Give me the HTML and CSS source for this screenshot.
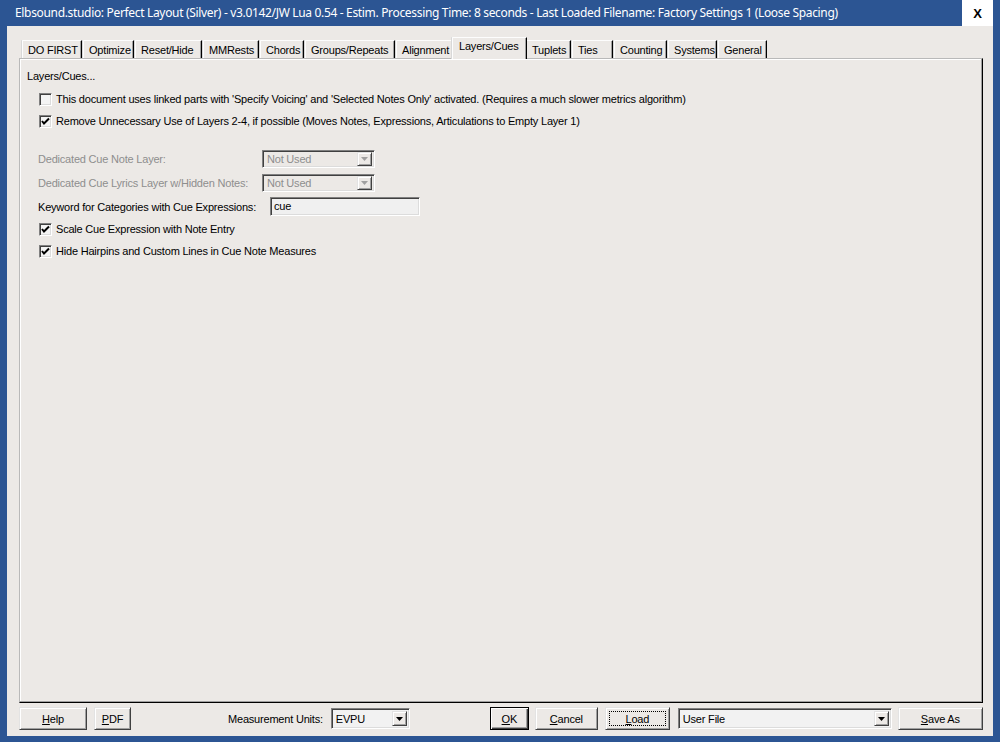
FILE: index.html
```html
<!DOCTYPE html>
<html>
<head>
<meta charset="utf-8">
<title>Perfect Layout</title>
<link rel="stylesheet" href="styles.css">
</head>
<body>
<div class="window">
  <div class="titlebar">
    <span class="title">Elbsound.studio: Perfect Layout (Silver) - v3.0142/JW Lua 0.54 - Estim. Processing Time: 8 seconds - Last Loaded Filename: Factory Settings 1 (Loose Spacing)</span>
    <div class="close">X</div>
  </div>
  <div class="client">
    <div class="tabs">
      <div class="tab t-do">DO FIRST</div>
      <div class="tab t-opt">Optimize</div>
      <div class="tab t-reset">Reset/Hide</div>
      <div class="tab t-mm">MMRests</div>
      <div class="tab t-ch">Chords</div>
      <div class="tab t-gr">Groups/Repeats</div>
      <div class="tab t-al">Alignment</div>
      <div class="tab selected t-lc">Layers/Cues</div>
      <div class="tab t-tu">Tuplets</div>
      <div class="tab t-ti">Ties</div>
      <div class="tab t-co">Counting</div>
      <div class="tab t-sy">Systems</div>
      <div class="tab t-ge">General</div>
    </div>
    <div class="panel">
      <div class="row heading">Layers/Cues...</div>
      <label class="row check">
        <span class="box"></span>
        <span>This document uses linked parts with 'Specify Voicing' and 'Selected Notes Only' activated. (Requires a much slower metrics algorithm)</span>
      </label>
      <label class="row check">
        <span class="box checked"><svg viewBox="0 0 13 13" width="13" height="13"><polyline points="3,6 5,8.5 10,3.5" fill="none" stroke="#000" stroke-width="2"/></svg></span>
        <span>Remove Unnecessary Use of Layers 2-4, if possible (Moves Notes, Expressions, Articulations to Empty Layer 1)</span>
      </label>
      <div class="spacer"></div>
      <div class="row field">
        <span class="flabel disabled">Dedicated Cue Note Layer:</span>
        <div class="combo dis">
          <span class="ctext">Not Used</span>
          <span class="arrow"><svg viewBox="0 0 7 4" width="7" height="4"><polygon points="0,0 7,0 3.5,4" fill="#a0a0a0"/></svg></span>
        </div>
      </div>
      <div class="row field">
        <span class="flabel disabled">Dedicated Cue Lyrics Layer w/Hidden Notes:</span>
        <div class="combo dis">
          <span class="ctext">Not Used</span>
          <span class="arrow"><svg viewBox="0 0 7 4" width="7" height="4"><polygon points="0,0 7,0 3.5,4" fill="#a0a0a0"/></svg></span>
        </div>
      </div>
      <div class="row field kw">
        <span class="klabel">Keyword for Categories with Cue Expressions:</span>
        <div class="input">cue</div>
      </div>
      <label class="row check">
        <span class="box checked"><svg viewBox="0 0 13 13" width="13" height="13"><polyline points="3,6 5,8.5 10,3.5" fill="none" stroke="#000" stroke-width="2"/></svg></span>
        <span>Scale Cue Expression with Note Entry</span>
      </label>
      <label class="row check">
        <span class="box checked"><svg viewBox="0 0 13 13" width="13" height="13"><polyline points="3,6 5,8.5 10,3.5" fill="none" stroke="#000" stroke-width="2"/></svg></span>
        <span>Hide Hairpins and Custom Lines in Cue Note Measures</span>
      </label>
    </div>
    <div class="footer">
      <div class="btn b-help"><u>H</u>elp</div>
      <div class="btn b-pdf"><u>P</u>DF</div>
      <span class="mlabel">Measurement Units:</span>
      <div class="combo en c-units">
        <span class="ctext">EVPU</span>
        <span class="arrow"><svg viewBox="0 0 7 4" width="7" height="4"><polygon points="0,0 7,0 3.5,4" fill="#000"/></svg></span>
      </div>
      <div class="btn default b-ok"><u>O</u>K</div>
      <div class="btn b-cancel"><u>C</u>ancel</div>
      <div class="btn focus b-load"><span class="focusrect"><u>L</u>oad</span></div>
      <div class="combo en c-file">
        <span class="ctext">User File</span>
        <span class="arrow"><svg viewBox="0 0 7 4" width="7" height="4"><polygon points="0,0 7,0 3.5,4" fill="#000"/></svg></span>
      </div>
      <div class="btn b-save"><u>S</u>ave As</div>
    </div>
  </div>
</div>
</body>
</html>
```
FILE: styles.css
```css
* { box-sizing: border-box; }
html, body { margin: 0; padding: 0; }
body {
  width: 1000px;
  height: 742px;
  overflow: hidden;
  background: #2c5593;
  font-family: "Liberation Sans", Arial, sans-serif;
  font-size: 11px;
  letter-spacing: -0.2px;
  color: #000;
}
.window {
  width: 1000px;
  height: 742px;
  display: flex;
  flex-direction: column;
  background: #2c5593;
  padding: 0 7px 6px 7px;
}
.titlebar {
  height: 26px;
  display: flex;
  align-items: center;
  margin: 0 -7px;
  padding-left: 15px;
}
.title {
  color: #fff;
  font-family: "Noto Sans", "Open Sans", sans-serif;
  font-size: 12px;
  letter-spacing: -0.33px;
  white-space: nowrap;
  flex: 1;
  overflow: hidden;
  padding-bottom: 1px;
}
.close {
  width: 31px;
  height: 26px;
  background: #fff;
  margin-right: 7px;
  display: flex;
  align-items: center;
  justify-content: center;
  font-weight: bold;
  font-size: 13px;
  letter-spacing: 0;
  color: #000;
}
.client {
  flex: 1;
  background: #ece9e6;
  display: flex;
  flex-direction: column;
  padding: 11px 10px 0 12px;
}
.tabs {
  display: flex;
  align-items: flex-end;
  height: 21px;
  padding-left: 3px;
  position: relative;
  z-index: 2;
}
.tab {
  height: 18px;
  line-height: 18px;
  padding: 0 5px;
  margin-right: 1px;
  border-top: 1px solid #fdfdfd;
  border-left: 1px solid #fdfdfd;
  border-right: 1px solid #000;
  box-shadow: inset -1px 0 #a0a0a0, -1px 0 #d8d8d8;
  border-top-left-radius: 1px;
  white-space: nowrap;
  background: #ece9e6;
}
.tab.selected {
  height: 22px;
  line-height: 16px;
  margin-left: -2px;
  margin-right: -1px;
  padding: 0 7px 4px 6px;
  margin-bottom: -1px;
  z-index: 3;
  position: relative;
}
.t-do { width: 60px; }
.t-opt { width: 51px; }
.t-reset { width: 67px; }
.t-mm { width: 56px; }
.t-ch { width: 44px; }
.t-gr { width: 90px; }
.t-al { width: 57px; }
.t-lc { width: 75px; }
.t-tu { width: 45px; }
.t-ti { width: 41px; }
.t-co { width: 53px; }
.t-sy { width: 49px; }
.t-ge { width: 49px; }

.panel {
  height: 645px;
  border-top: 1px solid #b9b9b9;
  border-left: 1px solid #b9b9b9;
  border-right: 1px solid #000;
  border-bottom: 1px solid #000;
  box-shadow: inset -1px -1px #a0a0a0, inset 1px 1px #fff;
  padding: 6px 0 0 6px;
  display: flex;
  flex-direction: column;
}
.row {
  display: flex;
  align-items: center;
  white-space: nowrap;
}
.heading { height: 23px; padding-left: 1px; padding-bottom: 1px; }
.check { height: 22px; padding-left: 13px; }
.box {
  width: 13px;
  height: 13px;
  margin-right: 4px;
  background: #f4f4f4;
  border-top: 1px solid #808080;
  border-left: 1px solid #808080;
  border-right: 1px solid #fff;
  border-bottom: 1px solid #fff;
  box-shadow: inset 1px 1px #404040, inset -1px -1px #dcdcdc;
  position: relative;
  flex: none;
}
.box svg {
  position: absolute;
  left: -1px;
  top: -1px;
}
.spacer { height: 15px; }
.field { height: 24px; padding-left: 12px; }
.kw { height: 23px; }
.flabel { width: 224px; flex: none; }
.klabel { width: 232px; flex: none; }
.disabled { color: #8e8e8e; }
.combo {
  height: 18px;
  display: flex;
  align-items: center;
  border-top: 1px solid #808080;
  border-left: 1px solid #808080;
  border-right: 1px solid #fff;
  border-bottom: 1px solid #fff;
  box-shadow: inset 1px 1px #404040, inset -1px -1px #dcdcdc;
  padding: 2px 2px 2px 3px;
}
.combo.dis {
  width: 113px;
  background: #ece9e6;
  color: #8e8e8e;
}
.ctext { flex: 1; padding-left: 1px; }
.arrow {
  width: 15px;
  height: 14px;
  display: flex;
  align-items: center;
  justify-content: center;
  background: #ece9e6;
  border-top: 1px solid #e3e3e3;
  border-left: 1px solid #e3e3e3;
  border-right: 1px solid #404040;
  border-bottom: 1px solid #404040;
  box-shadow: inset 1px 1px #fff, inset -1px -1px #a0a0a0;
}
.input {
  width: 150px;
  height: 19px;
  background: #f0f0f0;
  border-top: 1px solid #808080;
  border-left: 1px solid #808080;
  border-right: 1px solid #fff;
  border-bottom: 1px solid #fff;
  box-shadow: inset 1px 1px #404040, inset -1px -1px #dcdcdc;
  padding: 2px 3px;
  line-height: 13px;
}

.footer {
  display: flex;
  align-items: center;
  height: 32px;
  padding-bottom: 1px;
}
.btn {
  height: 23px;
  display: flex;
  align-items: center;
  justify-content: center;
  background: #ece9e6;
  border-top: 1px solid #e3e3e3;
  border-left: 1px solid #e3e3e3;
  border-right: 1px solid #404040;
  border-bottom: 1px solid #404040;
  box-shadow: inset 1px 1px #fff, inset -1px -1px #a0a0a0;
  flex: none;
}
.btn.default {
  border: 1px solid #000;
  box-shadow: inset 1px 1px #fff, inset -1px -1px #404040, inset -2px -2px #a0a0a0;
}
.focusrect {
  display: flex;
  align-items: center;
  justify-content: center;
  width: calc(100% - 6px);
  height: calc(100% - 6px);
  border: 1px dotted #000;
}
.b-help { width: 68px; }
.b-pdf { width: 37px; margin-left: 7px; }
.mlabel { margin-left: 97px; white-space: nowrap; }
.combo.en {
  height: 21px;
  background: #f2f2f2;
  padding: 2px 2px 2px 3px;
}
.c-units { width: 79px; margin-left: 8px; }
.b-ok { width: 39px; margin-left: 80px; }
.b-cancel { width: 63px; margin-left: 6px; }
.b-load { width: 65px; margin-left: 7px; }
.c-file { width: 214px; margin-left: 8px; }
.b-save { width: 85px; margin-left: 6px; }
.combo.en .arrow { height: 15px; }
u { text-decoration: underline; text-underline-offset: 1px; }
```
